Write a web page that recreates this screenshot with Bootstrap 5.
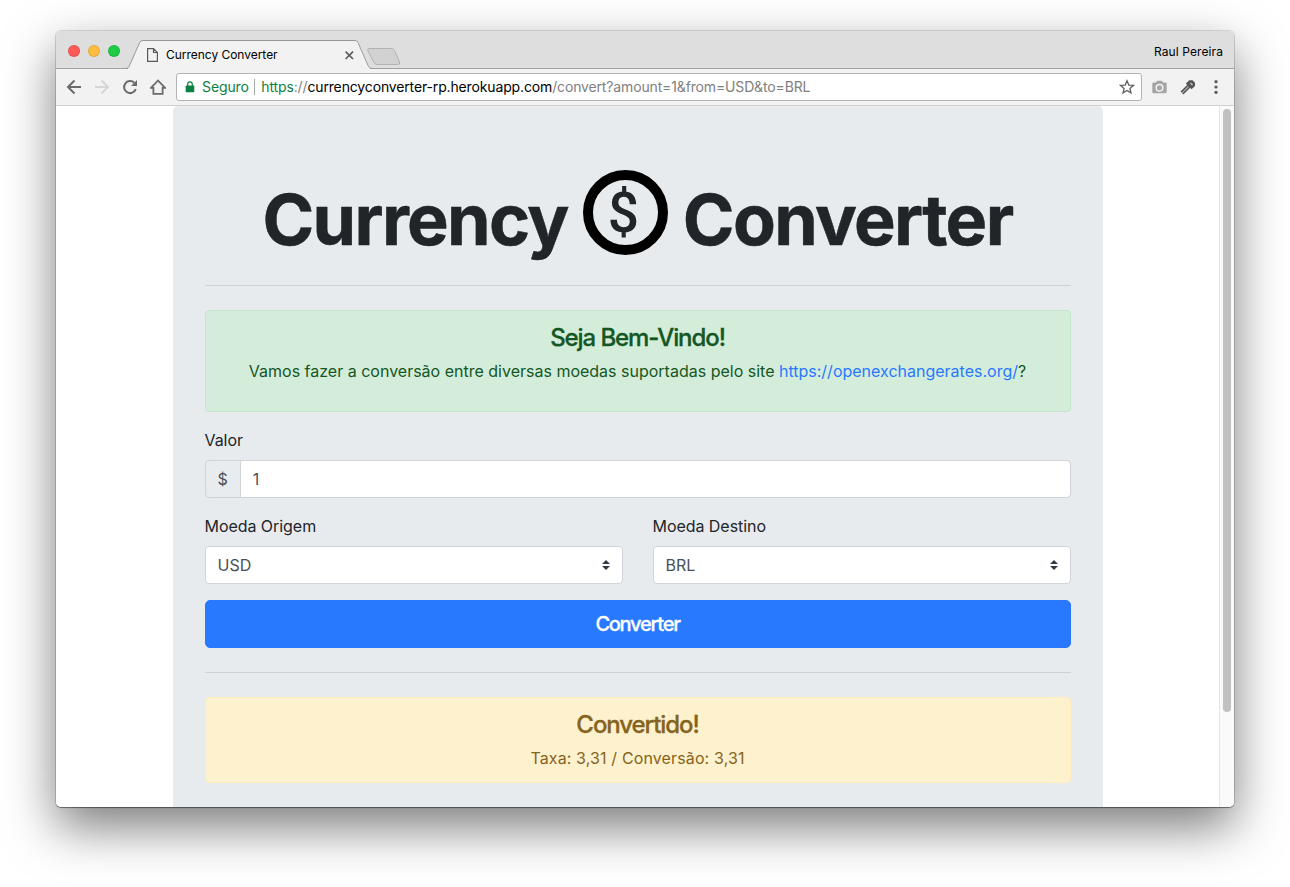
<!DOCTYPE html>
<html lang="pt-BR">
<head>
<meta charset="utf-8">
<title>Currency Converter</title>
<link href="https://cdn.jsdelivr.net/npm/bootstrap@5.3.0/dist/css/bootstrap.min.css" rel="stylesheet">
<style>
body{font-family:Inter,sans-serif;font-size:16px;color:#212529;background:#fff;height:887px;overflow:hidden;padding:31px 56px 0}
.window{height:776px;border-radius:5px;overflow:hidden;background:#fff}
.window-shadow{border-radius:5px;box-shadow:0 0 0 1px rgba(0,0,0,.12),0 1px 1px rgba(0,0,0,.4),0 20px 50px rgba(0,0,0,.52)}
.tabstrip{height:38px;background:#dedede;border-bottom:1px solid #a0a0a0;padding:0 11px 0 12px}
.dots{padding-top:14px}
.dot{width:12px;height:12px;border-radius:50%;border:1px solid rgba(0,0,0,.1);margin-right:8px}
.dot-close{background:#fc5b57}
.dot-min{background:#fdbe3f}
.dot-max{background:#1fcb47}
.page-tab{width:242px;height:30px;margin:8px 0 -1px -2px}
.tab-shape,.doc-icon,.close-icon{position:absolute}
.tab-shape{left:0;top:0}
.doc-icon{left:21px;top:9px}
.close-icon{left:219px;top:12px}
.tab-title{font-size:12px;line-height:31px;color:#000;padding-left:40px;letter-spacing:-.03px}
.profile{font-size:12px;color:#000;padding-top:4px;letter-spacing:.1px}
.toolbar{height:37px;background:#f2f2f2;border-bottom:1px solid #d0d0d0;padding:0 13px 0 10px}
.toolbar svg{flex:none}
.nav-icons{gap:12px;margin-right:10px}
.ext-icons{margin-left:10px;gap:13px}
.omnibox{height:28px;border:1px solid #b4b4b4;border-radius:3px;background:#fff;font-size:14px;line-height:24px;white-space:nowrap;padding:0 6px 0 8px}
.scheme{margin-left:7px;letter-spacing:-.1px}
.secure{color:#0b8043}
.muted{color:#808080}
.url{letter-spacing:-.145px}
.rule{width:1px;height:16px;background:#aaa;margin:0 6px 0 5.500px}
.viewport{height:701px;overflow:hidden}
.scroller{width:15px;background:#fafafa;border-left:1px solid #e6e6e6;padding:3px 3px 0}
.thumb{width:8px;height:603px;border-radius:4px;background:#c1c1c1}
.converter{width:930px;height:760px;background:#e8ebee;border-radius:5px;padding:64px 32px}
.hero{font-size:70px;line-height:85px;height:91px}
.hero b{margin-top:7px;font-weight:700;letter-spacing:-1.650px;-webkit-text-stroke:.5px}
.coin{width:85px;height:85px;border:10px solid #000;border-radius:50%;font-family:Roboto,sans-serif;font-weight:500;font-size:55px;line-height:67px;padding-right:4px;margin:0 15px}
.converter hr{margin:24px 0;border-top:1px solid #cfd2d5;opacity:1}
.alert{padding:13px 20px 12px;border-radius:4px;margin-bottom:16px}
.alert h4{font-size:24px;line-height:28px;margin-bottom:7px;letter-spacing:-1.080px;-webkit-text-stroke:.3px}
.alert-success{background:#d4edda;border-color:#c3e6cb;color:#155724}
.alert-success a{color:#2979ff;font-weight:400}
.alert-warning{background:#fdf1ce;border-color:#ffeeba;color:#856420}
.alert-warning p{letter-spacing:.13px}
.form-label{margin-bottom:8px;line-height:24px;display:block;letter-spacing:-.05px}
.form-control,.form-select,.input-group-text{height:38px;border-color:#ced4da;border-radius:4px;color:#495057}
.input-group-text{background:#e9ecef}
.form-select{background-image:url("data:image/svg+xml,%3Csvg xmlns='http://www.w3.org/2000/svg' viewBox='0 0 4 5'%3E%3Cpath fill='%23343a40' d='M2 0L0 2h4zm0 5L0 3h4z'/%3E%3C/svg%3E");background-size:8px 10px;background-position:right 12px center}
.pair{--bs-gutter-x:30px}
.btn-primary{background:#2979ff;border-color:#2979ff;height:48px;font-size:20px;font-weight:500;border-radius:5px;line-height:30px;padding:8px;letter-spacing:-1.250px;-webkit-text-stroke:.3px}
</style>
</head>
<body>
<div class="window-shadow"><div class="window">
  <div class="tabstrip d-flex">
    <div class="dots d-flex">
      <span class="dot dot-close"></span><span class="dot dot-min"></span><span class="dot dot-max"></span>
    </div>
    <div class="page-tab position-relative">
      <svg class="tab-shape" width="276" height="31" viewBox="0 0 276 31" fill="none">
        <path d="M2 31V29.500L14 3Q15 1.500 17 1.500H229Q231 1.500 232 3L244 29.500V31Z" fill="#f2f2f2"/>
        <path d="M0 29.500Q2 29.500 3 27.500L13.700 3.500Q14.500 1.500 17 1.500H229Q231 1.500 232 3.500L242.500 27.500Q243.500 29.500 246 29.500" stroke="#999"/>
        <path d="M243 9.500H265.500Q267.500 9.500 268.500 11.500L273.500 23Q274.500 25.500 271.500 25.500H251Q249 25.500 248 23.500L242 12Q241 9.500 243 9.500Z" fill="#d2d2d2" stroke="#b2b2b2"/>
      </svg>
      <svg class="doc-icon" width="12" height="14" fill="none" stroke="#5a5a5a" stroke-width="1.200"><path d="M.6 .6H6.500L10.400 4.500V13.400H.6ZM6.500 .6V4.500H10.400"/></svg>
      <div class="tab-title position-relative">Currency Converter</div>
      <svg class="close-icon" width="9" height="9" stroke="#5a5a5a" stroke-width="1.600"><path d="M.6 .6L8 8M8 .6L.6 8"/></svg>
    </div>
    <div class="profile ms-auto align-self-center">Raul Pereira</div>
  </div>
  <div class="toolbar d-flex align-items-center">
    <div class="nav-icons d-flex">
      <svg width="16" height="16" fill="none" stroke="#6a6a6a" stroke-width="2"><path d="M15 8H2M8.500 1.500L2 8L8.500 14.500"/></svg>
      <svg width="16" height="16" fill="none" stroke="#d6d6d6" stroke-width="2"><path d="M1 8H14M7.500 1.500L14 8L7.500 14.500"/></svg>
      <svg width="16" height="16" fill="none" stroke="#6a6a6a" stroke-width="2"><path d="M13.800 10A6 6 0 1 1 12.300 3.800"/><path d="M15 1V7H9Z" fill="#6a6a6a" stroke="none"/></svg>
      <svg width="16" height="16" fill="none" stroke="#6a6a6a" stroke-width="1.800"><path d="M1 8.800L8 1.500L15 8.800H12.600V14.800H3.400V8.800Z"/></svg>
    </div>
    <div class="omnibox d-flex align-items-center flex-grow-1">
      <svg width="10" height="12" fill="#0b8043"><path d="M1.500 4.500H8.500Q9.300 4.500 9.300 5.300V10.500Q9.300 11.300 8.500 11.300H1.500Q.7 11.300 .7 10.500V5.300Q.7 4.500 1.500 4.500Z"/><path d="M2.700 5V3.200a2.300 2.300 0 0 1 4.600 0V5" fill="none" stroke="#0b8043" stroke-width="1.200"/></svg>
      <span class="secure scheme">Seguro</span><i class="rule"></i>
      <span class="url"><span class="secure">https</span><span class="muted">://</span><span class="text-black">currencyconverter-rp.herokuapp.com</span><span class="muted">/convert?amount=1&amp;from=USD&amp;to=BRL</span></span>
      <svg class="ms-auto" width="16" height="16" fill="none" stroke="#5f5f5f" stroke-width="1.300"><path d="M8 1.800L9.800 6.100L14.400 6.400L10.900 9.400L12 13.900L8 11.500L4 13.900L5.100 9.400L1.600 6.400L6.200 6.100Z"/></svg>
    </div>
    <div class="ext-icons d-flex align-items-center">
      <svg width="15" height="14"><path d="M1.500 2.500H4L5 .8H10L11 2.500H13.500Q14.700 2.500 14.700 3.700V12Q14.700 13.200 13.500 13.200H1.500Q.3 13.200 .3 12V3.700Q.3 2.500 1.500 2.500Z" fill="#a5a5a5"/><circle cx="7.500" cy="7.700" r="3.300" fill="none" stroke="#f2f2f2" stroke-width="1.500"/></svg>
      <svg width="16" height="16"><path d="M9 7L2 14" stroke="#555" stroke-width="4"/><path d="M8.500 7.500L2.200 13.800" stroke="#aaa" stroke-width="1.200"/><path d="M5.800 4.500L9.300 1.200H12.500L15 3.700V7L11.600 10.200Z" fill="#555"/><path d="M10.500 4L12.500 6" stroke="#ccc" stroke-width="1.300"/></svg>
      <svg width="12" height="16" fill="#5a5a5a"><circle cx="7" cy="2.700" r="1.600"/><circle cx="7" cy="8" r="1.600"/><circle cx="7" cy="13.300" r="1.600"/></svg>
    </div>
  </div>
  <div class="viewport d-flex">
    <main class="flex-grow-1 d-flex justify-content-center">
      <div class="converter">
        <h1 class="hero d-flex justify-content-center mb-0"><b>Currency</b><span class="coin d-flex justify-content-center">$</span><b>Converter</b></h1>
        <hr>
        <div class="alert alert-success text-center"><h4>Seja Bem-Vindo!</h4><p class="mb-3">Vamos fazer a conversão entre diversas moedas suportadas pelo site <a href="#" class="text-decoration-none">https://openexchangerates.org/</a>?</p></div>
        <form>
          <label class="form-label">Valor</label>
          <div class="input-group mb-3"><span class="input-group-text">$</span><input class="form-control" value="1"></div>
          <div class="row pair mb-3">
            <div class="col-6"><label class="form-label">Moeda Origem</label><select class="form-select"><option>USD</option></select></div>
            <div class="col-6"><label class="form-label">Moeda Destino</label><select class="form-select"><option>BRL</option></select></div>
          </div>
          <button type="button" class="btn btn-primary w-100">Converter</button>
        </form>
        <hr>
        <div class="alert alert-warning text-center"><h4>Convertido!</h4><p class="mb-0">Taxa: 3,31 / Conversão: 3,31</p></div>
      </div>
    </main>
    <div class="scroller"><div class="thumb"></div></div>
  </div>
</div></div>
<script src="https://cdn.jsdelivr.net/npm/bootstrap@5.3.0/dist/js/bootstrap.bundle.min.js"></script>
</body>
</html>
